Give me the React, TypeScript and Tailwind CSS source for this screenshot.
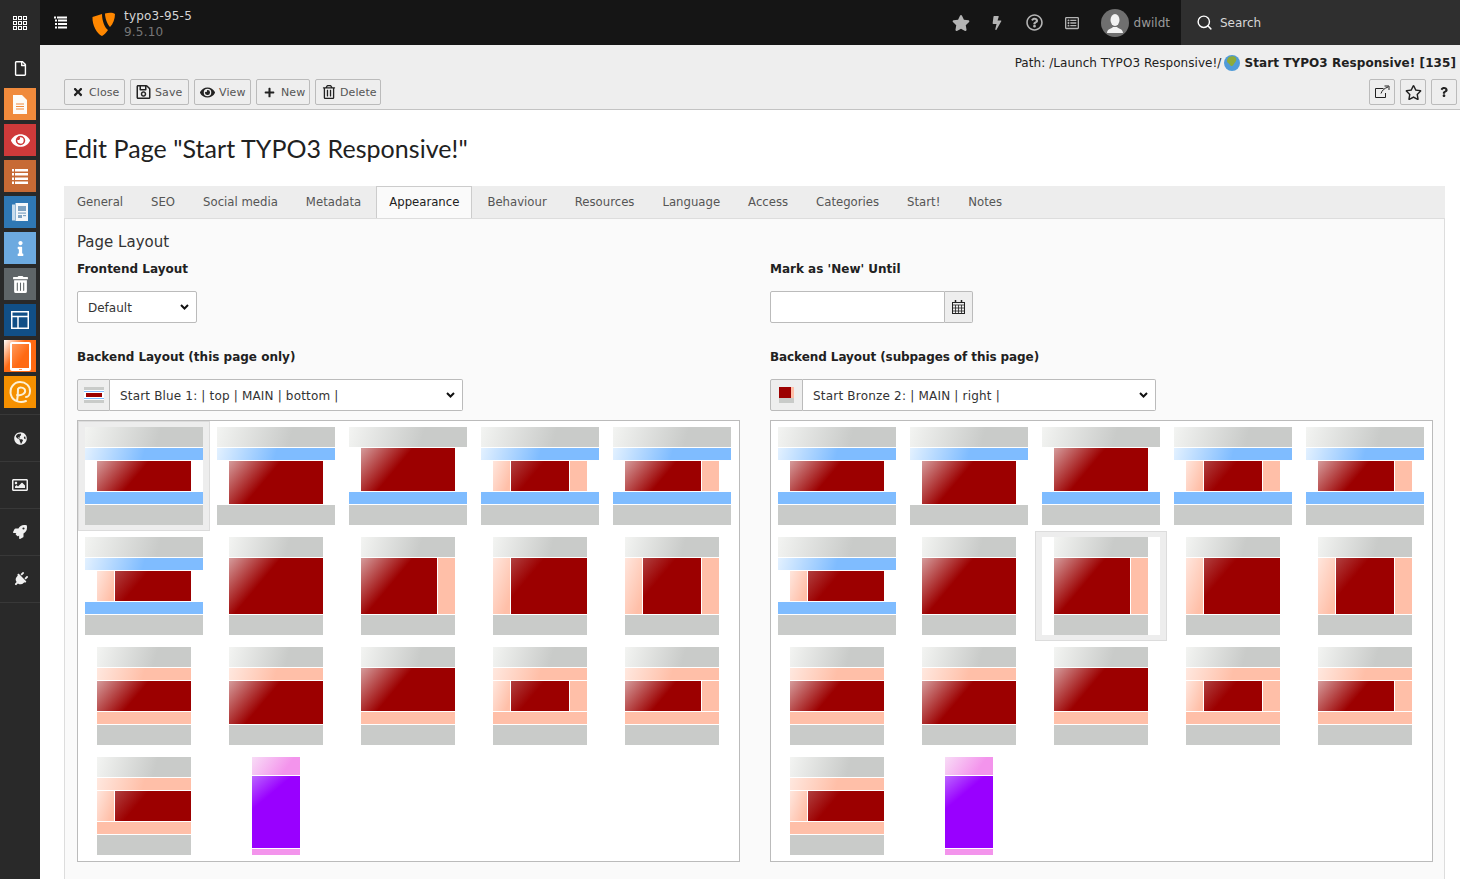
import { ReactNode } from "react";
import {
  FaStar,
  FaBolt,
  FaRegQuestionCircle,
  FaRegListAlt,
  FaRegFile,
  FaEye,
  FaInfo,
  FaTrashAlt,
  FaGlobeAmericas,
  FaRegImage,
  FaRocket,
  FaPlug,
  FaTimes,
  FaRegSave,
  FaPlus,
  FaRegTrashAlt,
  FaRegStar,
  FaQuestion,
} from "react-icons/fa";
import { Search } from "lucide-react";

type Band = "blue" | "peach";

interface ThumbSpec {
  top?: Band;
  bottom?: Band;
  left?: boolean;
  right?: boolean;
  purple?: boolean;
}

const thumbs: ThumbSpec[] = [
  { top: "blue", bottom: "blue" },
  { top: "blue" },
  { bottom: "blue" },
  { top: "blue", bottom: "blue", left: true, right: true },
  { top: "blue", bottom: "blue", right: true },
  { top: "blue", bottom: "blue", left: true },
  {},
  { right: true },
  { left: true },
  { left: true, right: true },
  { top: "peach", bottom: "peach" },
  { top: "peach" },
  { bottom: "peach" },
  { top: "peach", bottom: "peach", left: true, right: true },
  { top: "peach", bottom: "peach", right: true },
  { top: "peach", bottom: "peach", left: true },
  { purple: true },
];

const tabs = [
  "General",
  "SEO",
  "Social media",
  "Metadata",
  "Appearance",
  "Behaviour",
  "Resources",
  "Language",
  "Access",
  "Categories",
  "Start!",
  "Notes",
];

function Thumb({ spec }: { spec: ThumbSpec }) {
  if (spec.purple) {
    return (
      <div className="flex h-[98px] w-[118px] flex-col items-center gap-px bg-white">
        <div className="h-[18px] w-12 bg-[linear-gradient(125deg,#f8dcf6_0%,#f394ec_70%)]" />
        <div className="h-[72px] w-12 bg-[linear-gradient(140deg,#bb66ff_0px,#9900ff_26px)]" />
        <div className="h-[6px] w-12 bg-[#f394ec]" />
      </div>
    );
  }
  const wide = spec.top === "blue" || spec.bottom === "blue";
  const outer = wide ? "w-[118px]" : "w-[94px]";
  const topBand =
    spec.top === "blue"
      ? "bg-[linear-gradient(105deg,#e3f1ff_0%,#7fbcff_50%)]"
      : "bg-[linear-gradient(105deg,#ffe8df_0%,#ffbfa8_50%)]";
  const bottomBand = spec.bottom === "blue" ? "bg-[#7fbcff]" : "bg-[#ffbfa8]";
  // the gloss of the picture falls on the side column when there is one
  const mainFill = spec.left
    ? "bg-[linear-gradient(130deg,#b04040_0px,#9c0000_26px)]"
    : "bg-[linear-gradient(130deg,#d59c9c_0px,#9c0000_40px)]";
  return (
    <div className="flex h-[98px] w-[118px] flex-col items-center gap-px bg-white">
      <div
        className={`h-5 shrink-0 bg-[linear-gradient(105deg,#f3f4f2_0%,#c9cbc9_62%)] ${outer}`}
      />
      {spec.top && <div className={`h-3 shrink-0 ${outer} ${topBand}`} />}
      <div className="flex min-h-0 w-[94px] flex-1 gap-px">
        {spec.left && (
          <div className="w-[17px] shrink-0 bg-[linear-gradient(110deg,#ffe6dd_0%,#ffbfa8_85%)]" />
        )}
        <div className={`flex-1 ${mainFill}`} />
        {spec.right && <div className="w-[17px] shrink-0 bg-[#ffbfa8]" />}
      </div>
      {spec.bottom && <div className={`h-3 shrink-0 ${outer} ${bottomBand}`} />}
      <div className={`h-5 shrink-0 bg-[#c9cbc9] ${outer}`} />
    </div>
  );
}

function ThumbPicker({ selected }: { selected: number }) {
  return (
    <div className="grid h-[442px] w-[663px] grid-cols-[repeat(5,132px)] auto-rows-[110px] border border-[#bbbbbb] bg-white">
      {thumbs.map((spec, index) => (
        <div
          key={index}
          className={
            index === selected
              ? "border border-[#dcdcdc] bg-[#ededed] px-[6px] py-[5px]"
              : "border border-transparent px-[6px] py-[5px]"
          }
        >
          <Thumb spec={spec} />
        </div>
      ))}
    </div>
  );
}

function Select({
  width,
  label,
  className,
}: {
  width: string;
  label: string;
  className: string;
}) {
  return (
    <div className={`relative ${width}`}>
      <select
        defaultValue={label}
        className={`block h-8 w-full appearance-none border border-[#bbbbbb] bg-white pl-[10px] pt-[2px] text-[#333333] ${className}`}
      >
        <option>{label}</option>
      </select>
      <svg
        className="pointer-events-none absolute right-[8px] top-[13px]"
        width="9"
        height="6"
        viewBox="0 0 9 6"
        fill="none"
        stroke="#111111"
        strokeWidth="2"
      >
        <path d="M1 1l3.500 3.500L8 1" />
      </svg>
    </div>
  );
}

function ModuleSquare({
  color,
  children,
}: {
  color: string;
  children: ReactNode;
}) {
  return (
    <div
      className={`mb-1 ml-1 flex h-8 w-8 items-center justify-center text-white ${color}`}
    >
      {children}
    </div>
  );
}

function NavItem({ children }: { children: ReactNode }) {
  return (
    <div className="flex h-[47px] items-center justify-center border-t border-[#383838] text-[#f0f0f0]">
      {children}
    </div>
  );
}

function DocButton({
  width,
  icon,
  label,
}: {
  width: string;
  icon: ReactNode;
  label: string;
}) {
  return (
    <button
      className={`flex h-[26px] items-center rounded-[2px] border border-[#bbbbbb] bg-[#eeeeee] pl-[5px] text-[11px] tracking-[0.1px] text-[#555555] ${width}`}
    >
      <span className="flex w-[15px] items-center justify-center text-[#222222]">
        {icon}
      </span>
      <span className="ml-1 pt-[2px]">{label}</span>
    </button>
  );
}

function IconButton({ children }: { children: ReactNode }) {
  return (
    <button className="flex h-[26px] w-[26px] items-center justify-center rounded-[2px] border border-[#bbbbbb] bg-[#eeeeee] text-[#222222]">
      {children}
    </button>
  );
}

export default function App() {
  return (
    <div className="flex h-screen w-full overflow-hidden bg-white font-['DejaVu_Sans',sans-serif] text-xs text-[#212121]">
      {/* Module menu */}
      <aside className="flex w-10 shrink-0 flex-col bg-[#292929]">
        <div className="flex h-[45px] items-center justify-center text-white">
          <svg width="14" height="14" viewBox="0 0 14 14" fill="none" stroke="currentColor">
            {[0.5, 5.5, 10.5].map((y) =>
              [0.5, 5.5, 10.5].map((x) => (
                <rect key={`${x}-${y}`} x={x} y={y} width="3" height="3" />
              )),
            )}
          </svg>
        </div>
        <div className="flex h-[43px] items-center justify-center pt-1 text-white">
          <FaRegFile size={15} />
        </div>
        <ModuleSquare color="bg-[#f08a3c]">
          <svg width="14" height="19" viewBox="0 0 14 19">
            <path d="M0 0h9l5 5v14H0z" fill="#fdfbf8" />
            <path d="M3 9h8M3 11.500h8M3 14h8" stroke="#f08a3c" strokeWidth="1.200" />
          </svg>
        </ModuleSquare>
        <ModuleSquare color="bg-[#cf3a3a]">
          <FaEye size={19} />
        </ModuleSquare>
        <ModuleSquare color="bg-[#c76a35]">
          <svg width="16" height="15" viewBox="0 0 16 15" fill="currentColor">
            <rect y="0" width="2" height="2.500" />
            <rect x="3" y="0" width="13" height="2.500" />
            <rect y="4" width="2" height="2.500" />
            <rect x="3" y="4" width="13" height="2.500" />
            <rect y="8.500" width="2" height="2.500" />
            <rect x="3" y="8.500" width="13" height="2.500" />
            <rect y="12.500" width="2" height="2.500" />
            <rect x="3" y="12.500" width="13" height="2.500" />
          </svg>
        </ModuleSquare>
        <ModuleSquare color="bg-[#2f78b5]">
          <svg width="16" height="18" viewBox="0 0 16 18">
            <rect width="3" height="16" y="1.500" fill="#c9dcec" />
            <rect x="3.500" width="12.500" height="18" fill="#f4f7fa" />
            <rect x="6" y="3" width="8" height="5" fill="#7fa3c2" />
            <rect x="6" y="9.500" width="8" height="1.200" fill="#7fa3c2" />
            <rect x="6" y="12" width="4" height="3" fill="#7fa3c2" />
            <rect x="11" y="12" width="3" height="1.200" fill="#7fa3c2" />
          </svg>
        </ModuleSquare>
        <ModuleSquare color="bg-[#6daae0]">
          <FaInfo size={15} />
        </ModuleSquare>
        <ModuleSquare color="bg-[#5f6568]">
          <FaTrashAlt size={17} />
        </ModuleSquare>
        <ModuleSquare color="bg-[#114f86]">
          <svg width="18" height="18" viewBox="0 0 18 18" fill="none" stroke="currentColor" strokeWidth="1.500">
            <rect x="0.750" y="0.750" width="16.500" height="16.500" />
            <path d="M1 5.500h16M7 5.500V17" />
          </svg>
        </ModuleSquare>
        <ModuleSquare color="bg-[linear-gradient(125deg,#ffffff_0%,#ff6a13_40%)]">
          <svg width="21" height="29" viewBox="0 0 21 29">
            <defs>
              <linearGradient id="tab" x1="0" y1="0" x2="1" y2="1">
                <stop offset="0" stopColor="#ff9a5c" />
                <stop offset="0.600" stopColor="#ff6a13" />
              </linearGradient>
            </defs>
            <rect width="21" height="29" rx="2" fill="#ffffff" />
            <rect x="2" y="2" width="17" height="24" fill="url(#tab)" />
            <rect x="9" y="27" width="3" height="1" fill="#ff9a5c" />
          </svg>
        </ModuleSquare>
        <ModuleSquare color="bg-[#f59000]">
          <svg width="24" height="24" viewBox="0 0 24 24" fill="none" stroke="#fdf0d5" strokeWidth="2" strokeLinecap="round">
            <path d="M18 21c-5 2-13 1-15-6C1 8 6 2 12 2c6 0 10 4 10 9 0 4-2 6-4 6" />
            <path d="M9 21c1-5 1-9 1-12 1-2 6-2 7 1 1 3-3 6-8 5" />
          </svg>
        </ModuleSquare>
        <div className="mt-[2px]">
          <NavItem>
            <FaGlobeAmericas size={13} />
          </NavItem>
          <NavItem>
            <FaRegImage size={16} />
          </NavItem>
          <NavItem>
            <FaRocket size={14} />
          </NavItem>
          <NavItem>
            <FaPlug size={15} className="rotate-45" />
          </NavItem>
          <div className="border-t border-[#383838]" />
        </div>
      </aside>

      <div className="flex min-w-0 flex-1 flex-col">
        {/* Top bar */}
        <header className="flex h-[45px] shrink-0 items-center bg-[#151515]">
          <div className="flex w-10 justify-center text-white">
            <svg width="13" height="13" viewBox="0 0 13 13" fill="currentColor">
              <rect x="0" y="0.500" width="2" height="2" />
              <rect x="3" y="0.500" width="10" height="2" />
              <rect x="1" y="3.500" width="2" height="2" />
              <rect x="4" y="3.500" width="9" height="2" />
              <rect x="1" y="7" width="2" height="2" />
              <rect x="4" y="7" width="9" height="2" />
              <rect x="1" y="10.500" width="2" height="2" />
              <rect x="4" y="10.500" width="9" height="2" />
            </svg>
          </div>
          <svg className="ml-3 mt-[5px]" width="24" height="26" viewBox="7 6 24 26" fill="#ff8700">
            <path d="M7.500 11L17 8C17 15 20 22 23 24C21 27 19 29 17 30C12 28 7 19 7.500 11Z" />
            <path d="M20 7.500C24 6.500 28 6.500 30 8C30 13 28 18 25 21C22 18 20 12 20 7.500Z" />
          </svg>
          <div className="ml-2 flex flex-col pt-[2px] leading-[14px]">
            <span className="text-xs tracking-[0.2px] text-[#d5d5d5]">typo3-95-5</span>
            <span className="text-xs tracking-[0.2px] text-[#777777]">9.5.10</span>
          </div>
          <div className="ml-auto flex items-center text-[#b4b4b4]">
            <FaStar size={18} className="mr-[20px]" />
            <FaBolt size={14} className="mr-[22px]" />
            <FaRegQuestionCircle size={17} className="mr-[22px]" />
            <FaRegListAlt size={14} className="mr-[22px]" />
            <div className="flex h-7 w-7 items-center justify-center overflow-hidden rounded-full bg-[#6f6f6f]">
              <svg width="20" height="22" viewBox="0 0 20 22" fill="#f2f2f2">
                <ellipse cx="10" cy="8" rx="4.500" ry="6" />
                <path d="M2 21c0-4 4-4 6-6h4c2 2 6 2 6 6z" />
              </svg>
            </div>
            <span className="ml-[5px] mr-[11px] text-[#9a9a9a]">dwildt</span>
          </div>
          <div className="flex h-full w-[279px] items-center bg-[#2f2f2f] pl-[15px] text-[#d8d8d8]">
            <Search size={17} strokeWidth={2} className="text-white" />
            <span className="ml-[7px]">Search</span>
          </div>
        </header>

        {/* Doc header */}
        <div className="h-[65px] shrink-0 border-b border-[#c3c3c3] bg-[#eeeeee]">
          <div className="flex h-[34px] items-center justify-end pr-[4px] pt-[2px]">
            <span className="tracking-[0.05px]">Path: /Launch TYPO3 Responsive!/</span>
            <svg className="ml-[3px]" width="16" height="16" viewBox="0 0 16 16">
              <circle cx="8" cy="8" r="8" fill="#4f9bd9" />
              <path d="M5 2c3-1 6-1 7 1 1 3-1 4-2 6-1 2-3 3-4 1C5 8 3 8 3 6c0-2 1-3 2-4z" fill="#8dab3a" />
            </svg>
            <span className="ml-[4px] font-bold tracking-[0.07px]">Start TYPO3 Responsive! [135]</span>
          </div>
          <div className="flex justify-between pl-6 pr-[3px]">
            <div className="flex gap-[5px]">
              <DocButton width="w-[61px]" icon={<FaTimes size={12} />} label="Close" />
              <DocButton width="w-[59px]" icon={<FaRegSave size={16} />} label="Save" />
              <DocButton width="w-[57px]" icon={<FaEye size={15} />} label="View" />
              <DocButton width="w-[54px]" icon={<FaPlus size={11} />} label="New" />
              <DocButton width="w-[66px]" icon={<FaRegTrashAlt size={14} />} label="Delete" />
            </div>
            <div className="flex gap-[5px]">
              <IconButton>
                <svg width="16" height="14" viewBox="0 0 16 14" fill="none" stroke="currentColor" strokeWidth="1">
                  <path d="M9.500 3.500H1.500v9h10V8" />
                  <path d="M7 8.500c1-3 3-5 7-6.500M10.500 1H15v4" />
                </svg>
              </IconButton>
              <IconButton>
                <FaRegStar size={17} />
              </IconButton>
              <IconButton>
                <FaQuestion size={10} />
              </IconButton>
            </div>
          </div>
        </div>

        {/* Content */}
        <main className="min-h-0 flex-1 overflow-hidden pl-6 pr-[15px]">
          <h1 className="mb-[21px] mt-[21px] font-['Lato',sans-serif] text-[25px] leading-[34px] tracking-[0.05px] text-[#212121]">
            Edit Page "Start TYPO3 Responsive!"
          </h1>

          <nav className="flex h-8 bg-[#ededed]">
            {tabs.map((tab) => (
              <div
                key={tab}
                className={
                  tab === "Appearance"
                    ? "relative z-10 mr-[2px] h-8 border border-b-0 border-[#cccccc] bg-[#fafafa] px-3 text-[11.7px] leading-[30px] text-[#212121]"
                    : "mr-[2px] h-8 border border-transparent px-3 text-[11.7px] leading-[30px] text-[#555555]"
                }
              >
                {tab}
              </div>
            ))}
          </nav>

          <section className="h-[700px] border border-[#dddddd] bg-[#fafafa] px-3 pt-[13px]">
            <h2 className="text-[15px] leading-5 text-[#333333]">Page Layout</h2>
            <div className="grid grid-cols-[663px_663px] gap-x-[30px]">
              <div>
                <label className="mt-[9px] block font-bold leading-[16px]">Frontend Layout</label>
                <div className="mt-[14px]">
                  <Select width="w-[120px]" label="Default" className="rounded-[2px]" />
                </div>
              </div>
              <div>
                <label className="mt-[9px] block font-bold leading-[16px]">Mark as 'New' Until</label>
                <div className="mt-[14px] flex h-8 w-[203px]">
                  <input className="min-w-0 flex-1 rounded-l-[2px] border border-[#bbbbbb] bg-white" />
                  <div className="flex w-[28px] items-center justify-center rounded-r-[2px] border border-l-0 border-[#bbbbbb] bg-[#eeeeee] text-[#222222]">
                    <svg width="13" height="14" viewBox="0 0 13 14" fill="none" stroke="currentColor">
                      <rect x="0.500" y="2.500" width="12" height="11" />
                      <path d="M0.500 5h12M0.500 8h12M0.500 11h12M3.500 5v9M6.500 5v9M9.500 5v9" strokeWidth="0.800" />
                      <path d="M3.500 0v3M9.500 0v3" strokeWidth="1.500" />
                    </svg>
                  </div>
                </div>
              </div>

              <div>
                <label className="mt-[26px] block font-bold leading-[16px]">Backend Layout (this page only)</label>
                <div className="mt-[14px] flex h-8 w-[386px]">
                  <div className="flex w-[33px] items-center justify-center rounded-l-[2px] border border-[#bbbbbb] bg-[#eeeeee]">
                    <div className="flex w-5 flex-col items-center gap-[1px] bg-white">
                      <div className="h-[3px] w-5 bg-[#c9cbc9]" />
                      <div className="h-px w-5 bg-[#7fbcff]" />
                      <div className="h-[4px] w-4 bg-[#9c0000]" />
                      <div className="h-px w-5 bg-[#7fbcff]" />
                      <div className="h-[3px] w-5 bg-[#c9cbc9]" />
                    </div>
                  </div>
                  <Select
                    width="flex-1"
                    label="Start Blue 1: | top | MAIN | bottom |"
                    className="rounded-r-[2px] border-l-0 tracking-[0.17px]"
                  />
                </div>
                <div className="mt-[9px]">
                  <ThumbPicker selected={0} />
                </div>
              </div>
              <div>
                <label className="mt-[26px] block font-bold leading-[16px] tracking-[-0.08px]">Backend Layout (subpages of this page)</label>
                <div className="mt-[14px] flex h-8 w-[386px]">
                  <div className="flex w-[33px] items-center justify-center rounded-l-[2px] border border-[#bbbbbb] bg-[#eeeeee]">
                    <div className="flex h-[16px] w-[15px] flex-col bg-[#c9cbc9]">
                      <div className="flex h-[11px] w-[15px]">
                        <div className="w-[12px] bg-[#9c0000]" />
                        <div className="flex-1 bg-[#ffbfa8]" />
                      </div>
                    </div>
                  </div>
                  <Select
                    width="flex-1"
                    label="Start Bronze 2: | MAIN | right |"
                    className="rounded-r-[2px] border-l-0 tracking-[0.2px]"
                  />
                </div>
                <div className="mt-[9px]">
                  <ThumbPicker selected={7} />
                </div>
              </div>
            </div>
          </section>
        </main>
      </div>
    </div>
  );
}
